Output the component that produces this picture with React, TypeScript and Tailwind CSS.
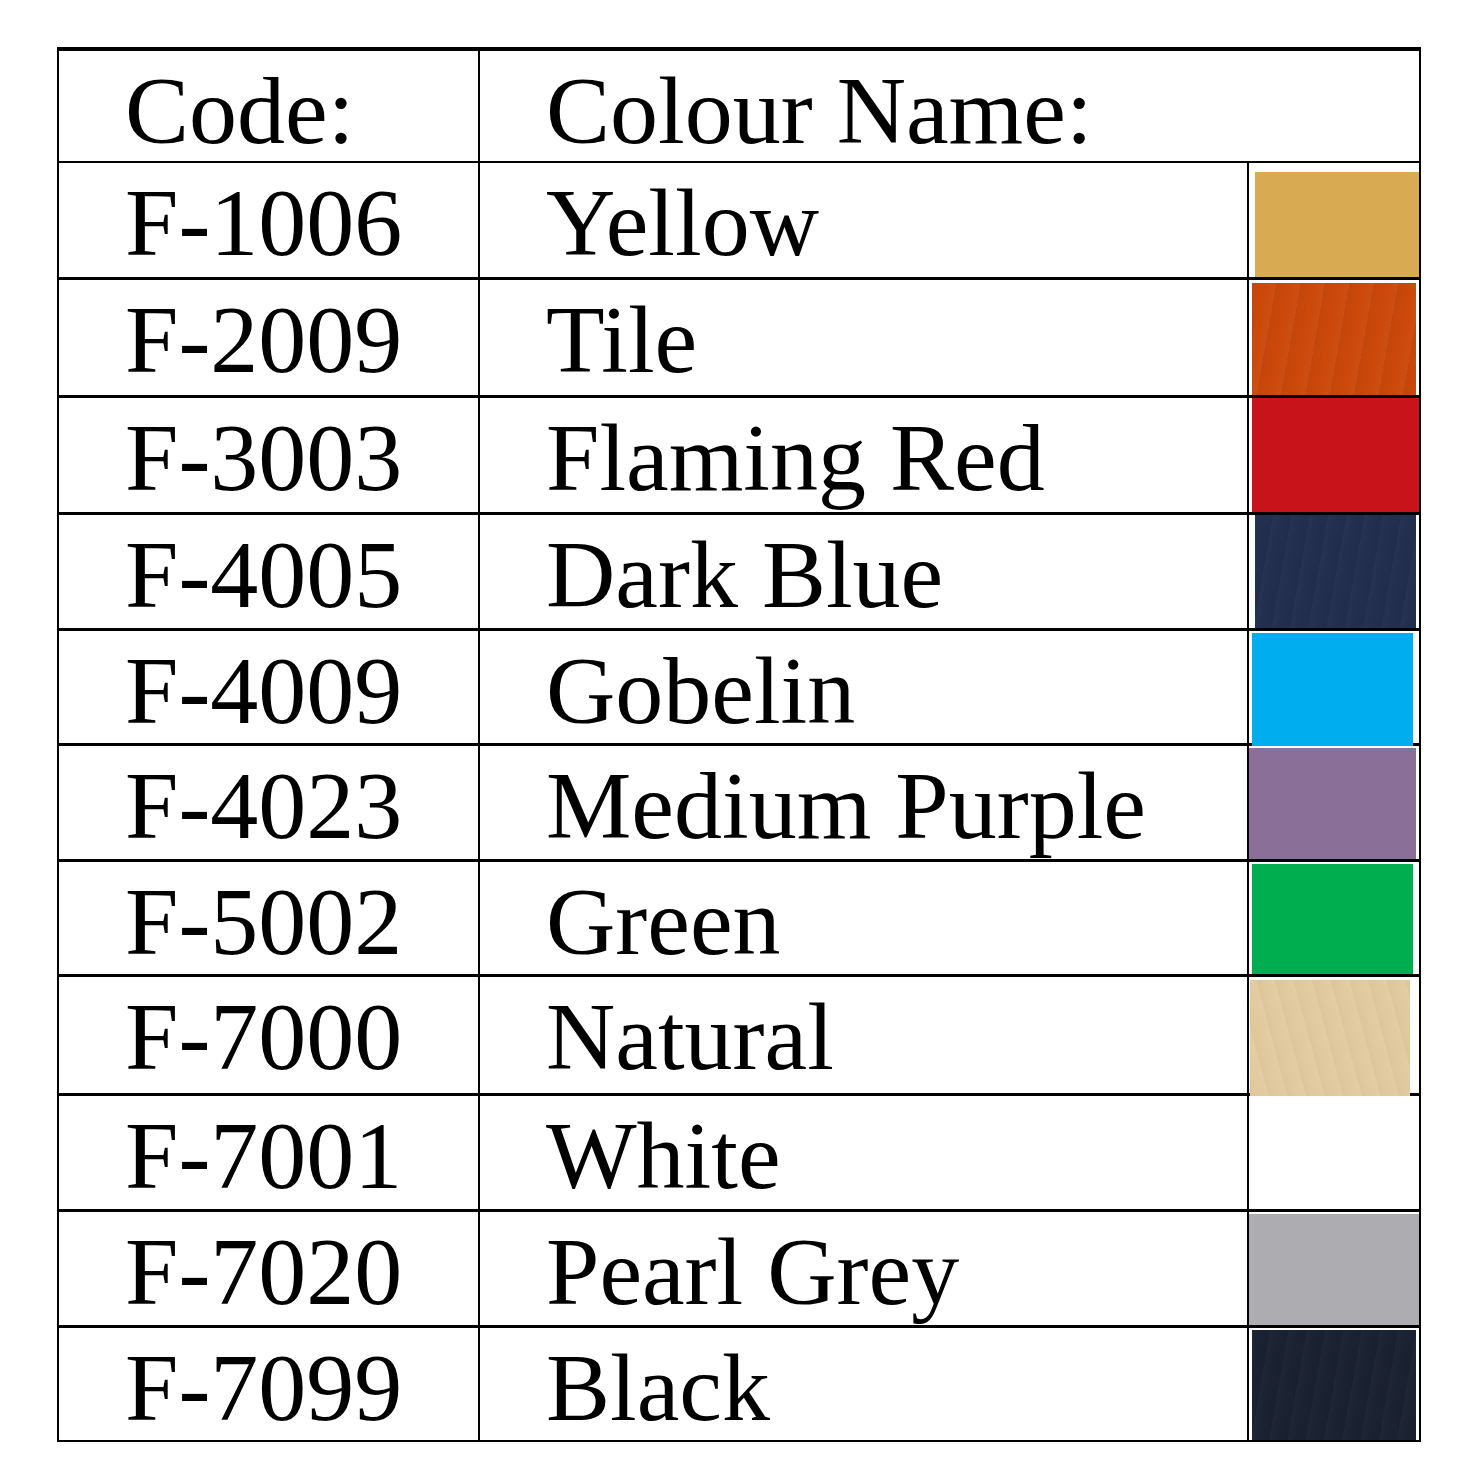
const rows = [
  { code: "F-1006", name: "Yellow", h: "h-[117px]", swatch: "ml-[6px] mt-[9px] mb-0 mr-0 bg-[#d8ab52]" },
  { code: "F-2009", name: "Tile", h: "h-[118px]", swatch: "ml-[3px] mr-[3px] mt-[3px] mb-0 bg-[#cc480b] bg-[repeating-linear-gradient(100deg,rgba(0,0,0,0.04)_0px,rgba(0,0,0,0)_12px,rgba(255,255,255,0.03)_24px)]" },
  { code: "F-3003", name: "Flaming Red", h: "h-[117px]", swatch: "ml-[3px] mr-0 mt-0 mb-0 bg-[#c9131a]" },
  { code: "F-4005", name: "Dark Blue", h: "h-[116px]", swatch: "ml-[6px] mr-[3px] mt-0 mb-0 bg-[#222f4e] bg-[repeating-linear-gradient(100deg,rgba(255,255,255,0.02)_0px,rgba(0,0,0,0)_9px,rgba(0,0,0,0.04)_18px)]" },
  { code: "F-4009", name: "Gobelin", h: "h-[115px]", swatch: "ml-[3px] mr-[6px] mt-[2px] mb-[-3px] bg-[#00aeef]" },
  { code: "F-4023", name: "Medium Purple", h: "h-[116px]", swatch: "ml-0 mr-[3px] mt-[2px] mb-0 bg-[#8a7099]" },
  { code: "F-5002", name: "Green", h: "h-[115px]", swatch: "ml-[3px] mr-[6px] mt-[2px] mb-0 bg-[#00ad4f]" },
  { code: "F-7000", name: "Natural", h: "h-[119px]", swatch: "ml-[1px] mr-[9px] mt-[3px] mb-[-3px] bg-[#e1ca9e] bg-[repeating-linear-gradient(75deg,rgba(120,90,40,0.04)_0px,rgba(0,0,0,0)_9px,rgba(255,255,255,0.05)_18px)]" },
  { code: "F-7001", name: "White", h: "h-[116px]", swatch: "" },
  { code: "F-7020", name: "Pearl Grey", h: "h-[116px]", swatch: "ml-0 mr-0 mt-[2px] mb-0 bg-[#adacb1]" },
  { code: "F-7099", name: "Black", h: "h-[112px]", swatch: "ml-[3px] mr-[3px] mt-[2px] mb-0 bg-[#1b2232] bg-[repeating-linear-gradient(100deg,rgba(255,255,255,0.02)_0px,rgba(0,0,0,0)_9px,rgba(0,0,0,0.06)_18px)]" },
];

export default function App() {
  return (
    <div className="min-h-[1469px] w-[1460px] bg-white pt-[47px] pl-[57px] font-['Liberation_Serif','Times_New_Roman',serif] text-black">
      <div className="flex w-[1364px] flex-col border-x-2 border-t-4 border-b-2 border-black">
        <div className="flex h-[112px] border-b-2 border-black">
          <div className="w-[421px] border-r-2 border-black pl-[66px] pt-[5px] text-[96px] leading-[110px]">
            Code:
          </div>
          <div className="flex-1 pl-[66px] pt-[5px] text-[96px] leading-[110px]">
            Colour Name:
          </div>
        </div>

        {rows.map((r, i) => (
          <div
            key={r.code}
            className={
              i === rows.length - 1
                ? "flex " + r.h
                : "flex border-b-[3px] border-black " + r.h
            }
          >
            <div className="w-[421px] border-r-2 border-black pl-[66px] pt-[5px] text-[96px] leading-[110px] whitespace-nowrap">
              {r.code}
            </div>
            <div className="flex-1 border-r-2 border-black pl-[66px] pt-[5px] text-[96px] leading-[110px] whitespace-nowrap">
              {r.name}
            </div>
            <div className="flex w-[170px] flex-col">
              {r.swatch ? <div className={"flex-1 " + r.swatch} /> : null}
            </div>
          </div>
        ))}
      </div>
    </div>
  );
}
